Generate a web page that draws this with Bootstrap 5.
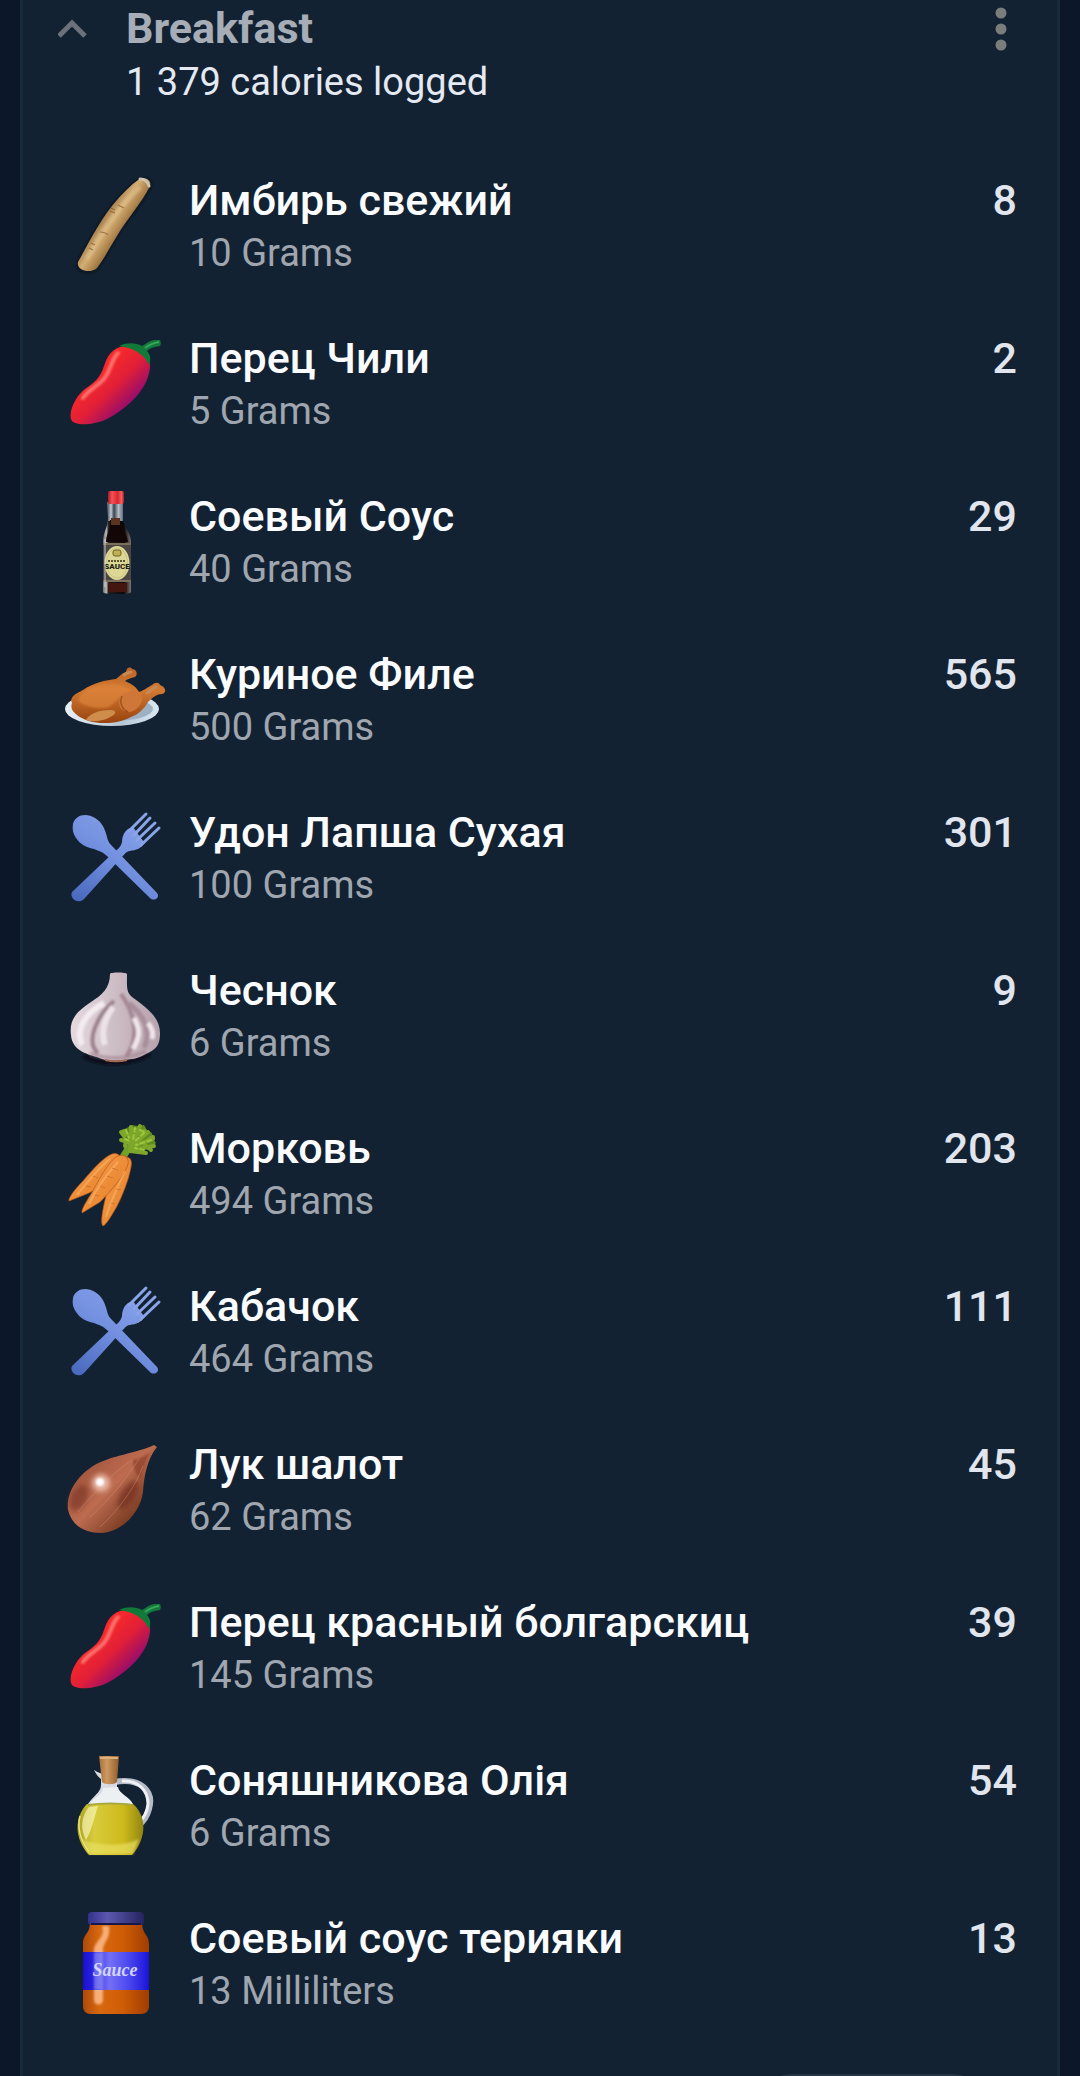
<!DOCTYPE html>
<html lang="ru">
<head>
<meta charset="utf-8">
<meta name="viewport" content="width=device-width, initial-scale=1">
<title>Breakfast</title>
<link rel="stylesheet" href="https://cdn.jsdelivr.net/npm/bootstrap@5.3.0/dist/css/bootstrap.min.css">
<style>
  body { background: #0c1829; font-family: Roboto, "Noto Sans", sans-serif; }
  .meal-panel { background: #132232; border-left: 3px solid #1a2a3a; border-right: 3px solid #1a2a3a; margin: 0 20px; }
  .meal-head { padding: 0 39px 0 35px; }
  .meal-name { font-size: 43px; line-height: 56px; font-weight: 700; color: #a6adb7; }
  .meal-total { font-size: 38px; line-height: 52px; color: #e4e9f2; }
  .icon-btn { background: none; border: 0; padding: 0; width: 36px; height: 56px; display: block; }
  .meal-text { margin-left: 32px; }
  .food-list { padding: 38px 40px 32px 41px; }
  .food-row { padding: 26px 0; gap: 21px; }
  .food-pic { width: 104px; height: 104px; flex: none; margin: 2px 0 -2px; }
  .food-name { font-size: 43px; line-height: 56px; font-weight: 500; color: #fafcff; }
  .food-amount { font-size: 38px; line-height: 50px; color: #9fa6af; }
  .food-cal { font-size: 43px; line-height: 56px; font-weight: 500; color: #e0e5ee; }
  .add-btn { width: 248px; height: 90px; margin-right: 61px; border: 2px solid #263545; border-radius: 45px; background: none; display: block; }
</style>
<script src="https://cdn.jsdelivr.net/npm/bootstrap@5.3.0/dist/js/bootstrap.bundle.min.js"></script>
</head>
<body class="vh-100 overflow-hidden">
<svg width="0" height="0" class="position-absolute" aria-hidden="true">
  <defs>
    <filter id="soft" x="-50%" y="-50%" width="200%" height="200%"><feGaussianBlur stdDeviation="2.5"/></filter>
    <filter id="soft1" x="-50%" y="-50%" width="200%" height="200%"><feGaussianBlur stdDeviation="1.2"/></filter>
    <linearGradient id="gRoot" gradientUnits="userSpaceOnUse" x1="38" y1="46" x2="56" y2="58"><stop offset="0" stop-color="#a98350"/><stop offset=".4" stop-color="#d3ae74"/><stop offset="1" stop-color="#a07640"/></linearGradient>
    <linearGradient id="gPep" gradientUnits="userSpaceOnUse" x1="38" y1="38" x2="68" y2="68"><stop offset="0" stop-color="#f5282c"/><stop offset=".45" stop-color="#e01f38"/><stop offset="1" stop-color="#970d6c"/></linearGradient>
    <linearGradient id="gBot" x1="0" x2="1"><stop offset="0" stop-color="#6f7073"/><stop offset=".12" stop-color="#b9b9b9"/><stop offset=".2" stop-color="#221d1c"/><stop offset=".75" stop-color="#0d0808"/><stop offset=".9" stop-color="#4f4745"/><stop offset="1" stop-color="#7a7877"/></linearGradient>
    <linearGradient id="gNeck" x1="0" x2="1"><stop offset="0" stop-color="#5a6470"/><stop offset=".2" stop-color="#c3cad3"/><stop offset=".4" stop-color="#39424e"/><stop offset=".7" stop-color="#b4bcc8"/><stop offset="1" stop-color="#66707c"/></linearGradient>
    <linearGradient id="gCap" x1="0" x2="1"><stop offset="0" stop-color="#a91a20"/><stop offset=".25" stop-color="#f25258"/><stop offset=".6" stop-color="#d9282d"/><stop offset=".85" stop-color="#f06064"/><stop offset="1" stop-color="#a01a1f"/></linearGradient>
    <linearGradient id="gPlate" x1="0" x2="1"><stop offset="0" stop-color="#e9f1f8"/><stop offset=".6" stop-color="#b4c6d6"/><stop offset="1" stop-color="#dbe8f3"/></linearGradient>
    <linearGradient id="gBird" x1="0" y1="0" x2="0" y2="1"><stop offset="0" stop-color="#bd6327"/><stop offset=".4" stop-color="#d37a31"/><stop offset="1" stop-color="#98430f"/></linearGradient>
    <linearGradient id="gBlue" gradientUnits="userSpaceOnUse" x1="80" y1="10" x2="20" y2="96"><stop offset="0" stop-color="#8ba5ea"/><stop offset=".5" stop-color="#7390e0"/><stop offset="1" stop-color="#4b6bbf"/></linearGradient>
    <linearGradient id="gGar" x1="0" x2="1"><stop offset="0" stop-color="#e4d9de"/><stop offset=".5" stop-color="#cdbdc5"/><stop offset="1" stop-color="#b7a2ac"/></linearGradient>
    <linearGradient id="gCar" x1="0" y1="0" x2="1" y2="1"><stop offset="0" stop-color="#f5a04f"/><stop offset=".6" stop-color="#ec8a35"/><stop offset="1" stop-color="#c9661c"/></linearGradient>
    <linearGradient id="gSha" gradientUnits="userSpaceOnUse" x1="20" y1="30" x2="72" y2="80"><stop offset="0" stop-color="#a4563f"/><stop offset=".45" stop-color="#bd6c50"/><stop offset="1" stop-color="#74381f"/></linearGradient>
    <linearGradient id="gOil" x1="0" x2="1"><stop offset="0" stop-color="#a9a021"/><stop offset=".25" stop-color="#d8cc3c"/><stop offset=".7" stop-color="#cdb91a"/><stop offset="1" stop-color="#8f8513"/></linearGradient>
    <linearGradient id="gCork" x1="0" x2="1"><stop offset="0" stop-color="#a56f3a"/><stop offset=".4" stop-color="#cf9a60"/><stop offset="1" stop-color="#8f5b2b"/></linearGradient>
    <linearGradient id="gJar" x1="0" x2="1"><stop offset="0" stop-color="#b04a0a"/><stop offset=".25" stop-color="#d8680f"/><stop offset=".6" stop-color="#cf5d06"/><stop offset="1" stop-color="#a03d03"/></linearGradient>
    <linearGradient id="gLid" x1="0" x2="1"><stop offset="0" stop-color="#34318a"/><stop offset=".35" stop-color="#5c58b0"/><stop offset="1" stop-color="#25235e"/></linearGradient>
    <linearGradient id="gLab" x1="0" x2="1"><stop offset="0" stop-color="#1a0fd0"/><stop offset=".15" stop-color="#2a22e0"/><stop offset=".4" stop-color="#7470f5"/><stop offset=".7" stop-color="#4a46ee"/><stop offset="1" stop-color="#1b12d8"/></linearGradient>

    <symbol id="ginger" viewBox="0 -1 104 104">
      <path d="M12 88C26 64 36 42 53 24 62 14 70 6 77 3c6-2 12 2 11 8C78 31 63 46 54 61c-6 11-14 25-21 34-6 7-23 2-21-7z" fill="#0a1421" filter="url(#soft1)"/>
      <path d="M14 87C27 64 37 43 53 25 62 15 70 7 76 4c6-2 12 1 10 7C77 29 62 45 53 61 46 72 40 84 33 93c-6 6-21 3-19-6z" fill="url(#gRoot)"/>
      <path d="M23 84C36 60 48 39 76 12" fill="none" stroke="#e4c592" stroke-width="5" opacity=".5" filter="url(#soft1)"/>
      <path d="M76 4c5 0 8 3 9 7" fill="none" stroke="#cfc3ae" stroke-width="3" stroke-linecap="round"/>
      <path d="M54 30l6 3M46 36l5 2M47 33l4 2M36 57c3 0 6 1 8 3M27 68l4 2M25 73l4 2" fill="none" stroke="#7b5526" stroke-width="1.200" opacity=".65"/>
    </symbol>
    <symbol id="pepper" viewBox="0 -2 104 104">
      <path d="M56 13c-9 3-13 10-16 19-4 12-9 16-19 23C13 61 5 75 7 85c2 8 24 6 36 0 17-9 32-22 39-37 6-13 5-24 0-29-6-6-17-9-26-6z" fill="url(#gPep)"/>
      <path d="M54 19c-8 8-7 20-16 28-6 6-14 9-19 17" fill="none" stroke="#ff9a90" stroke-width="4" stroke-linecap="round" opacity=".65" filter="url(#soft1)"/>
      <path d="M55 12c9-4 17-3 23 0 4-2 8-6 13-6l5 0c1 2 1 4 0 6-6 1-10 2-13 5 4 5 4 9 2 14-5-11-15-17-30-19z" fill="#127a38"/>
      <path d="M81 14c4-3 8-5 14-6" fill="none" stroke="#38a460" stroke-width="2"/>
    </symbol>
    <symbol id="soy" viewBox="2 -1 104 104">
      <path d="M45 11h16v16c0 10 8 13 8 25v49c0 3-28 3-28 0V52c0-12 5-15 5-25z" fill="url(#gBot)"/>
      <path d="M46 10h15v20H46z" fill="url(#gNeck)"/>
      <path d="M48 29h10l1 5c2 6 6 9 7 17H44c0-8 4-11 4-17z" fill="#120706"/>
      <path d="M49 27h9v7h-9z" fill="#5a3421"/>
      <rect x="46" y="0" width="16" height="13" rx="2" fill="url(#gCap)"/>
      <rect x="41" y="52" width="28" height="39" fill="#4b4745"/><path d="M41 53h28M41 90h28" stroke="#8d7d62" stroke-width="1.500"/>
      <path d="M46 92h19v9H46z" fill="#43160f"/>
      <ellipse cx="55" cy="72" rx="12.500" ry="17" fill="#dcd795"/>
      <ellipse cx="55" cy="72" rx="10.500" ry="15" fill="none" stroke="#c9c47e"/>
      <rect x="51" y="59" width="8" height="6" rx="2" fill="#c0b052" stroke="#706024"/>
      <text x="55" y="78" text-anchor="middle" font-family="Roboto" font-weight="900" font-size="8" fill="#211f14">SAUCE</text>
      <path d="M46 70h18" stroke="#56532e" stroke-width="2" stroke-dasharray="2 1"/>
      <path d="M43 48v48" stroke="#d8d8d8" stroke-width="1.500" opacity=".6"/>
    </symbol>
    <symbol id="chicken" viewBox="0 0 104 104">
      <ellipse cx="48" cy="61" rx="47" ry="17" fill="url(#gPlate)"/><ellipse cx="50" cy="61" rx="39" ry="12" fill="#9db1c3"/>
      <path d="M8 55c-3-7 6-10 11-13C29 35 42 32 52 31c4-3 6-6 10-7 0-4 4-6 6-3 5 0 6 6 3 8-4 1-8 2-10 4 7 3 11 6 14 11 6-2 9-5 13-7 3-3 7-3 8 0 6 2 7 8 2 9-5 0-9 3-14 8-4 7-9 12-17 15-10 6-29 8-42 4C14 69 5 63 8 55z" fill="url(#gBird)"/>
      <path d="M14 53c4-12 22-20 42-16 7 2 10 5 12 9-14-3-16 14-29 14-10 0-17-1-25-7z" fill="#dd833b" opacity=".7" filter="url(#soft1)"/>
      <path d="M56 51c4-8 15-10 22-6 2 9-4 17-12 19-8 0-13-6-10-13z" fill="#cf7738"/>
      <path d="M58 48c-3 7 0 13 6 16" fill="none" stroke="#8f4314" stroke-width="1.500" opacity=".7"/>
      <path d="M22 72c3-6 12-10 25-10 6 0 5 4 1 6-6 4-17 7-26 4z" fill="#cf8d4b"/>
      <path d="M60 27c3-2 5-3 7-3M83 45c4-2 6-5 9-6" stroke="#c58a58" stroke-width="3" stroke-linecap="round"/>
    </symbol>
    <symbol id="cutlery" viewBox="0 0 104 104">
      <g fill="url(#gBlue)">
        <path d="M9 18C11 9 22 6 31 12c7 4 10 11 12 19 1 5 3 7 7 11l43 45c3 4-1 8-6 6L43 50c-4-4-8-5-13-7-9-2-14-5-18-11C9 28 8 23 9 18z"/>
        <path d="M64 23l5-2 10 14-1 5c-4 5-12 4-15 6-2 1-4 4-6 6L20 93c-6 6-15-1-12-7l40-38c5-4 9-7 10-12 0-5 2-10 6-13z"/>
        <path d="M64 24l6 2 11 11-4 4H64z"/>
      </g>
      <path d="M65 25L82 8M70 29L86 12M73 34L91 17M77 39L95 22" stroke="#8aa4e9" stroke-width="3" stroke-linecap="round"/>
    </symbol>
    <symbol id="garlic" viewBox="0 -5 104 104">
      <path d="M20 87c18 10 48 8 66-2" stroke="#09111c" stroke-width="5" fill="none" filter="url(#soft1)"/>
      <path d="M46 5c0-2 16-2 17 0 0 12-1 18 5 23 12 9 28 19 28 36 0 15-6 17-16 22-7 4-12 4-20 5-12 2-21 0-27-3-11-3-25-7-26-22C5 51 12 43 27 33 38 26 46 19 46 5z" fill="url(#gGar)"/>
      <g fill="none" filter="url(#soft1)">
        <path d="M34 84C21 73 33 46 50 32" stroke="#9d828d" stroke-width="4"/>
        <path d="M62 88c13-18 10-42-5-63" stroke="#a58794" stroke-width="4"/>
        <path d="M80 79c8-18 0-32-15-45" stroke="#a88f9b" stroke-width="5"/>
        <path d="M18 76c-8-18 7-34 22-42" stroke="#f3ebef" stroke-width="6"/>
        <path d="M41 76c-5-15 0-27 8-38" stroke="#ece3e8" stroke-width="6"/>
        <path d="M69 80c8-14 7-20 1-31M88 70c2-6 0-11-4-16" stroke="#efe6eb" stroke-width="5"/>
        <path d="M26 84c14 6 36 8 56-2" stroke="#a28491" stroke-width="4" opacity=".6"/>
      </g>
      <path d="M41 91c9 2 18 1 22 0" stroke="#a36b51" stroke-width="2" fill="none"/>
    </symbol>
    <symbol id="carrot" viewBox="0 -1 104 104">
      <path d="M59 34c3-6 7-11 11-15" stroke="#73a028" stroke-width="7" fill="none"/>
      <path d="M57 7l6-2 4-3 7 1 6-1 3 5 5 3 1 6 3 4-4 4-1 4-7-3-9 2-5-6-8-3 1-5z" fill="#5f8c1f"/>
      <g fill="none" stroke="#7da62a" stroke-width="4" stroke-linecap="round" stroke-linejoin="round">
        <path d="M66 28l3-12-9-8M68 20l-11-3M68 18l-1-14M70 17l6-14M70 21l14-12M69 23l20-7M68 27l22-4M66 28l16 2M77 13l-6-7M81 22l6 5M60 13l-3-4M61 23l1-6M74 10l6-2M84 17l5-3"/>
      </g>
      <path d="M62 7l3 8M71 5l-2 12M80 10L70 19M87 17l-15 5M80 27l-9-2M76 7l4 2M61 16l5 2" stroke="#9cc63d" stroke-width="2" stroke-linecap="round" stroke-dasharray="4 3"/>
      <g fill="url(#gCar)" stroke="#b65a18" stroke-width=".7">
        <path d="M48 31c5-2 11 2 8 8-2 7-16 23-31 31L5 78c-1-3 7-13 14-20 11-13 21-24 29-27z"/>
        <path d="M57 35c7-3 12 0 10 9-2 12-9 30-15 41-5 8-9 16-13 18-3-3 0-18 3-30 3-15 8-33 15-38z"/>
        <path d="M54 33c7-3 13 3 9 11-4 10-16 24-27 35L18 90c-1-5 8-16 14-28 8-14 15-26 22-29z"/>
      </g>
      <path d="M54 39C43 51 33 64 25 81M46 36C34 45 23 60 13 72M61 48C53 65 46 80 42 94" stroke="#ffc078" stroke-width="2" fill="none" opacity=".45"/>
      <path d="M48 45l6 2M43 53l6 2M36 63l5 2M31 72l4 1M29 53l5 2M22 63l5 1M52 66l5 1M47 80l4 1" stroke="#c76a22" stroke-width="1" opacity=".7"/>
    </symbol>
    <symbol id="shallot" viewBox="-1 0 104 104">
      <path d="M89 7l3 2c-10 12-13 30-14 45-2 18-19 40-42 41C20 95 7 88 3 72 1 53 14 37 28 28 46 17 73 15 89 7z" fill="url(#gSha)"/>
      <path d="M68 22c6-1 12-4 17-7-5 8-8 18-9 26-5-5-8-10-8-19z" fill="#8d3f2a" opacity=".7" filter="url(#soft1)"/>
      <ellipse cx="14" cy="60" rx="8" ry="14" transform="rotate(25 14 60)" fill="#7a3628" opacity=".65" filter="url(#soft)"/>
      <ellipse cx="63" cy="57" rx="7" ry="16" transform="rotate(33 63 57)" fill="#6d2b1d" opacity=".65" filter="url(#soft)"/>
      <path d="M25 79C44 62 62 40 74 21M35 89C54 71 70 50 78 28M13 74C27 57 47 35 67 22" fill="none" stroke="#d79676" stroke-width="1" opacity=".4"/>
      <circle cx="36" cy="45" r="9" fill="#e7b6a4" filter="url(#soft)"/><circle cx="35" cy="44" r="4" fill="#fff" filter="url(#soft1)"/>
    </symbol>
    <symbol id="oil" viewBox="-3 0 104 104">
      <path d="M47 28C75 23 87 38 82 55c-2 8-6 13-11 17" fill="none" stroke="#b5bbc7" stroke-width="6"/>
      <path d="M55 27c17-1 26 10 26 23-1 9-4 14-9 18" fill="none" stroke="#f0f1f5" stroke-width="3"/>
      <path d="M27 16c5 3 8 4 13 4h10v13c3 9 17 14 20 27H17c3-16 17-19 17-29v-6c-3-2-5-5-7-9z" fill="#d8dce2"/>
      <path d="M36 34c0 7-9 9-13 16h43c-4-8-14-10-15-17z" fill="#edf0f2"/>
      <path d="M20 50h46c14 12 14 34-1 51H22C7 85 7 63 20 50z" fill="url(#gOil)"/>
      <path d="M21 51c13-2 32-2 44 0" stroke="#a8a63e" stroke-width="2" fill="none"/>
      <path d="M15 85c13 7 42 8 57 0l-6 15H22z" fill="#ece265" opacity=".65" filter="url(#soft1)"/>
      <path d="M31 52c-4 12-6 24-12 34-6-11-5-23 3-33z" fill="#f8f3b6" opacity=".7"/>
      <path d="M13 62c-3 12 1 25 9 36" fill="none" stroke="#e9e47d" stroke-width="1.500"/>
      <path d="M32 2h20l-2 26c-3 3-12 3-15 0z" fill="url(#gCork)"/><path d="M33 4h18" stroke="#dfb07a" stroke-width="2"/>
    </symbol>
    <symbol id="jar" viewBox="0 0 104 104">
      <path d="M26 10h52c0 13 7 12 7 22v62c0 5-3 8-8 8H27c-5 0-8-3-8-8V32c0-11 7-9 7-22z" fill="url(#gJar)"/>
      <path d="M38 14c4 13-9 15-8 26v48c0 6 9 6 9 0V38c0-8 8-11 6-24z" fill="#ffc091" opacity=".8" filter="url(#soft1)"/>
      <rect x="19" y="40" width="66" height="38" fill="url(#gLab)"/>
      <path d="M30 40h9v38h-9z" fill="#c0c4ff" opacity=".4" filter="url(#soft1)"/>
      <text x="51" y="64" text-anchor="middle" font-family="'Liberation Serif', serif" font-style="italic" font-weight="700" font-size="18" fill="#d3d5ff">Sauce</text>
      <rect x="24" y="0" width="56" height="13" rx="4" fill="url(#gLid)"/><path d="M27 12h50" stroke="#191748" stroke-width="2"/>
    </symbol>
  </defs>
</svg>

<main class="meal-panel">
  <header class="meal-head d-flex align-items-start">
    <button class="icon-btn" type="button" aria-label="Collapse Breakfast"><svg width="36" height="56" viewBox="0 0 36 56"><path d="M0 36L13 23l13 13" transform="translate(1 0)" fill="none" stroke="#6c727b" stroke-width="5"/></svg></button>
    <div class="meal-text flex-grow-1">
      <h1 class="meal-name mb-0">Breakfast</h1>
      <p class="meal-total mb-0">1 379 calories logged</p>
    </div>
    <button class="icon-btn" type="button" aria-label="Meal options"><svg width="36" height="56" viewBox="0 0 36 56" fill="#7b7d7c"><circle cx="19" cy="13" r="5.500"/><circle cx="19" cy="29" r="5.500"/><circle cx="19" cy="45" r="5.500"/></svg></button>
  </header>
  <ul class="food-list list-unstyled mb-0" id="foods"></ul>
  <div class="d-flex justify-content-end"><button class="add-btn" type="button" aria-label="Add food"></button></div>
</main>

<script>
  const foods = [
    ["ginger", "Имбирь свежий", "10 Grams", 8],
    ["pepper", "Перец Чили", "5 Grams", 2],
    ["soy", "Соевый Соус", "40 Grams", 29],
    ["chicken", "Куриное Филе", "500 Grams", 565],
    ["cutlery", "Удон Лапша Сухая", "100 Grams", 301],
    ["garlic", "Чеснок", "6 Grams", 9],
    ["carrot", "Морковь", "494 Grams", 203],
    ["cutlery", "Кабачок", "464 Grams", 111],
    ["shallot", "Лук шалот", "62 Grams", 45],
    ["pepper", "Перец красный болгарскиц", "145 Grams", 39],
    ["oil", "Соняшникова Олія", "6 Grams", 54],
    ["jar", "Соевый соус терияки", "13 Milliliters", 13]
  ];
  document.getElementById("foods").innerHTML = foods.map(([icon, name, amount, cal]) => `
    <li class="food-row d-flex align-items-start">
      <svg class="food-pic" aria-hidden="true"><use href="#${icon}"/></svg>
      <div class="flex-grow-1">
        <div class="food-name">${name}</div>
        <div class="food-amount">${amount}</div>
      </div>
      <div class="food-cal">${cal}</div>
    </li>`).join("");
</script>
</body>
</html>
